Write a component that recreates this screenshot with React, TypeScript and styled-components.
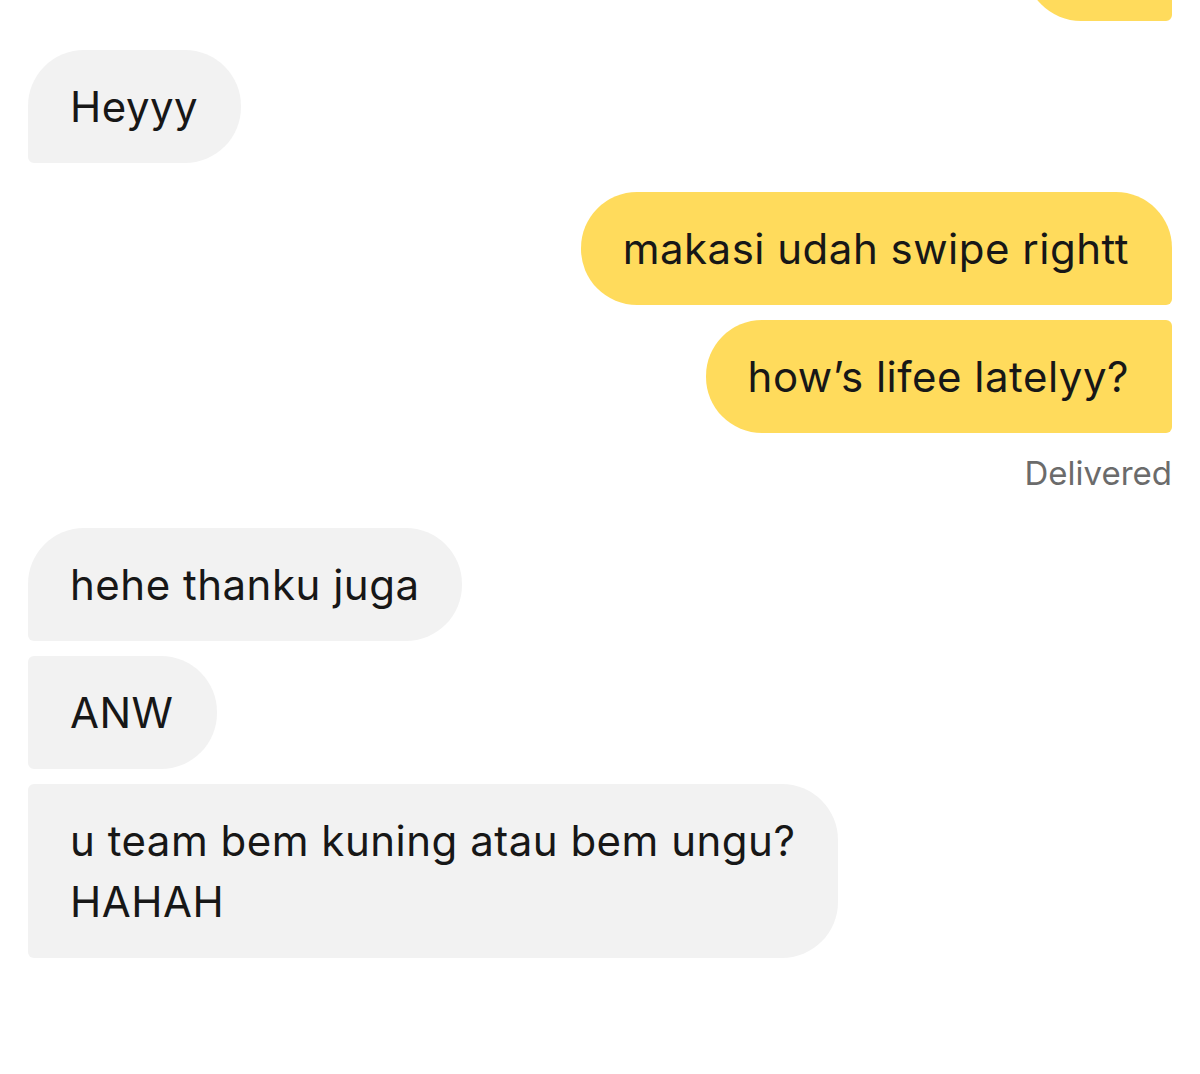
import React from "react";
import styled, { createGlobalStyle } from "styled-components";

const Global = createGlobalStyle`
  html, body { margin: 0; padding: 0; background: #ffffff; }
  body { font-family: Inter, "Noto Sans", sans-serif; overflow: hidden; }
`;

const Screen = styled.div`
  width: 1200px;
  height: 1074px;
  overflow: hidden;
  background: #ffffff;
  box-sizing: border-box;
  padding: 0 28px;
`;

const Thread = styled.div`
  display: flex;
  flex-direction: column;
`;

const Group = styled.div<{ $mine?: boolean }>`
  display: flex;
  flex-direction: column;
  align-items: ${(p) => (p.$mine ? "flex-end" : "flex-start")};
  gap: 15px;
  margin-bottom: 29px;
`;

type Radii = { tl: number; tr: number; br: number; bl: number };

const Bubble = styled.div<{ $mine?: boolean; $r: Radii }>`
  box-sizing: border-box;
  background: ${(p) => (p.$mine ? "#FFDB5C" : "#F2F2F2")};
  color: #171717;
  font-family: Inter, "Noto Sans", sans-serif;
  font-size: 42px;
  line-height: 61px;
  letter-spacing: 0.5px;
  padding: 26px 43px 26px 42px;
  border-radius: ${(p) => `${p.$r.tl}px ${p.$r.tr}px ${p.$r.br}px ${p.$r.bl}px`};
  max-width: 840px;
`;

const ClippedBubble = styled.div`
  width: 147px;
  height: 112px;
  margin-top: -91px;
  background: #ffdb5c;
  border-radius: 56px 56px 6px 56px;
`;

const Status = styled.div`
  font-family: Inter, "Noto Sans", sans-serif;
  font-size: 33px;
  line-height: 40px;
  color: #6b6b6b;
  margin-top: 5px;
  margin-bottom: 6px;
`;

const L = 56;
const S = 6;

export default function App() {
  return (
    <>
      <Global />
      <Screen>
        <Thread>
          <Group $mine>
            <ClippedBubble />
          </Group>
          <Group>
            <Bubble $r={{ tl: L, tr: L, br: L, bl: S }}>Heyyy</Bubble>
          </Group>
          <Group $mine>
            <Bubble $mine $r={{ tl: L, tr: L, br: S, bl: L }}>
              makasi udah swipe rightt
            </Bubble>
            <Bubble $mine $r={{ tl: L, tr: S, br: S, bl: L }}>
              how’s lifee latelyy?
            </Bubble>
            <Status>Delivered</Status>
          </Group>
          <Group>
            <Bubble $r={{ tl: L, tr: L, br: L, bl: S }}>hehe thanku juga</Bubble>
            <Bubble $r={{ tl: S, tr: L, br: L, bl: S }}>ANW</Bubble>
            <Bubble $r={{ tl: S, tr: L, br: L, bl: S }}>
              u team bem kuning atau bem ungu?
              <br />
              HAHAH
            </Bubble>
          </Group>
        </Thread>
      </Screen>
    </>
  );
}
